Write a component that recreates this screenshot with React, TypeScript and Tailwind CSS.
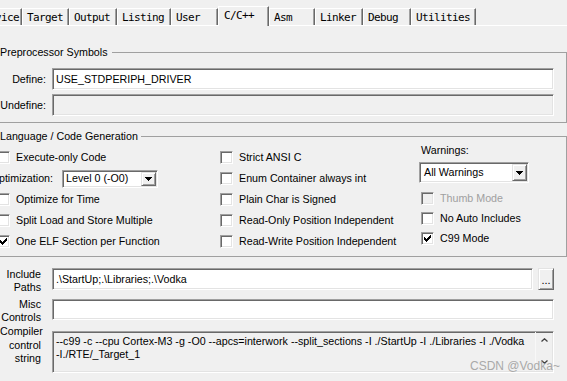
import React from 'react';

const sunken =
  "border border-t-[#a0a0a0] border-l-[#a0a0a0] border-r-white border-b-white shadow-[inset_1px_1px_0_#696969,inset_-1px_-1px_0_#e3e3e3]";
const raised =
  "border border-t-[#e3e3e3] border-l-[#e3e3e3] border-r-[#696969] border-b-[#696969] shadow-[inset_1px_1px_0_#ffffff,inset_-1px_-1px_0_#a0a0a0]";

function Tick() {
  const px = [
    [6, 0], [5, 1], [6, 1], [0, 2], [4, 2], [5, 2], [6, 2], [0, 3], [1, 3], [3, 3], [4, 3], [5, 3],
    [0, 4], [1, 4], [2, 4], [3, 4], [4, 4], [1, 5], [2, 5], [3, 5], [2, 6],
  ];
  return (
    <svg width="7" height="7" viewBox="0 0 7 7" shapeRendering="crispEdges">
      {px.map(([x, y], i) => (
        <rect key={i} x={x} y={y} width="1" height="1" fill="#000" />
      ))}
    </svg>
  );
}

function DownArrow() {
  return (
    <svg width="7" height="4" viewBox="0 0 7 4" shapeRendering="crispEdges">
      <path d="M0 0H7V1H6V2H5V3H4V4H3V3H2V2H1V1H0Z" fill="#000" />
    </svg>
  );
}

function Chevron({ up }: { up?: boolean }) {
  return (
    <svg width="7" height="4" viewBox="0 0 7 4">
      <path d={up ? "M0.5 3.5L3.5 0.8L6.5 3.5" : "M0.5 0.5L3.5 3.2L6.5 0.5"} fill="none" stroke="#404040" strokeWidth="1.3" />
    </svg>
  );
}

function Box({ checked, disabled }: { checked?: boolean; disabled?: boolean }) {
  return (
    <span
      className={`${sunken} w-[13px] h-[13px] shrink-0 flex items-center justify-center ${
        disabled ? 'bg-[#f0f0f0]' : 'bg-white'
      }`}
    >
      {checked && <Tick />}
    </span>
  );
}

function CheckRow({
  label,
  checked,
  disabled,
  tall,
}: {
  label: string;
  checked?: boolean;
  disabled?: boolean;
  tall?: boolean;
}) {
  return (
    <div className={`flex items-center gap-[6px] whitespace-nowrap ${tall ? 'h-[21px]' : 'h-[20px]'}`}>
      <Box checked={checked} disabled={disabled} />
      <span className={disabled ? 'text-[#a0a0a0]' : 'text-black'}>{label}</span>
    </div>
  );
}

const tabs = [
  { label: 'Device', w: 'w-[44px]' },
  { label: 'Target', w: 'w-[47px]' },
  { label: 'Output', w: 'w-[48px]' },
  { label: 'Listing', w: 'w-[54px]' },
  { label: 'User', w: 'w-[47px]' },
  { label: 'C/C++', w: 'w-[51px]', active: true },
  { label: 'Asm', w: 'w-[46px]' },
  { label: 'Linker', w: 'w-[48px]' },
  { label: 'Debug', w: 'w-[48px]' },
  { label: 'Utilities', w: 'w-[65px]' },
];

export default function App() {
  return (
    <div className="w-[567px] h-[381px] overflow-hidden bg-[#f0f0f0] relative text-black text-[10.7px] leading-[13px] font-[family-name:'Liberation_Sans',Arial,sans-serif]">
      {/* Tabs */}
      <div className="h-[26px] flex items-end border-b border-white font-[family-name:'DejaVu_Sans_Mono',monospace] text-[11px] tracking-[-0.62px]">
        <div className="flex items-end -ml-[22px]">
          {tabs.map((t) =>
            t.active ? (
              <div
                key={t.label}
                className={`${t.w} h-[20px] -mb-px shrink-0 bg-[#f0f0f0] border-t border-l border-r border-t-white border-l-white border-r-[#696969] shadow-[inset_-1px_0_0_#a0a0a0] pl-[5px] pt-[3px] leading-[12px] whitespace-nowrap`}
              >
                {t.label}
              </div>
            ) : (
              <div
                key={t.label}
                className={`${t.w} h-[17px] shrink-0 border-t border-l border-r border-t-white border-l-white border-r-[#696969] shadow-[inset_-1px_0_0_#a0a0a0] pl-[4px] pt-[3px] leading-[12px] whitespace-nowrap`}
              >
                {t.label}
              </div>
            )
          )}
        </div>
      </div>

      <div className="-ml-[8px] w-[575px]">
        {/* Preprocessor Symbols */}
        <fieldset className="mt-[20px] border border-[#a0a0a0] pb-[6px]">
          <legend className="ml-[7px] pr-[4px] leading-[13px]">Preprocessor Symbols</legend>
          <div className="pt-[9px] flex flex-col gap-[4px]">
            <div className="flex items-center h-[22px]">
              <div className="w-[53px] text-right whitespace-nowrap">Define:</div>
              <div className={`${sunken} ml-[6px] w-[502px] h-[22px] bg-white flex items-center pl-[3px]`}>
                USE_STDPERIPH_DRIVER
              </div>
            </div>
            <div className="flex items-center h-[22px]">
              <div className="w-[53px] text-right whitespace-nowrap">Undefine:</div>
              <div className={`${sunken} ml-[6px] w-[502px] h-[22px] bg-[#f0f0f0]`} />
            </div>
          </div>
        </fieldset>

        {/* Language / Code Generation */}
        <fieldset className="mt-[7px] border border-[#a0a0a0] pb-[4px]">
          <legend className="ml-[7px] pr-[3px] leading-[13px]">Language / Code Generation</legend>
          <div className="flex">
            <div className="w-[227px] pt-[4px] flex flex-col">
              <div className="ml-[4px]">
                <CheckRow label="Execute-only Code" tall />
              </div>
              <div className="flex items-center h-[21px]">
                <div className="w-[60px] flex justify-end whitespace-nowrap">
                  <span>Optimization:</span>
                </div>
                <div className={`${sunken} ml-[9px] w-[96px] h-[18px] bg-white p-[1px] flex items-stretch`}>
                  <span className="flex-1 pl-[2px] flex items-center whitespace-nowrap">Level 0 (-O0)</span>
                  <span className={`${raised} w-[15px] bg-[#f0f0f0] flex items-center justify-center`}>
                    <DownArrow />
                  </span>
                </div>
              </div>
              <div className="ml-[4px]">
                <CheckRow label="Optimize for Time" tall />
                <CheckRow label="Split Load and Store Multiple" tall />
                <CheckRow label="One ELF Section per Function" checked tall />
              </div>
            </div>

            <div className="w-[199px] pt-[4px] flex flex-col">
              <CheckRow label="Strict ANSI C" tall />
              <CheckRow label="Enum Container always int" tall />
              <CheckRow label="Plain Char is Signed" tall />
              <CheckRow label="Read-Only Position Independent" tall />
              <CheckRow label="Read-Write Position Independent" tall />
            </div>

            <div className="pt-[1px] flex flex-col">
              <div className="ml-[2px] h-[13px]">Warnings:</div>
              <div className={`${sunken} mt-[5px] w-[110px] h-[21px] bg-white p-[1px] flex items-stretch`}>
                <span className="flex-1 pl-[3px] flex items-center whitespace-nowrap">All Warnings</span>
                <span className={`${raised} w-[15px] bg-[#f0f0f0] flex items-center justify-center`}>
                  <DownArrow />
                </span>
              </div>
              <div className="ml-[2px] mt-[5px]">
                <CheckRow label="Thumb Mode" disabled />
                <CheckRow label="No Auto Includes" />
                <CheckRow label="C99 Mode" checked />
              </div>
            </div>
          </div>
        </fieldset>
      </div>

      {/* Bottom controls */}
      <div className="flex flex-col">
        <div className="mt-[11px] h-[22px] flex items-start">
          <div className="w-[41px] text-right leading-[13px] shrink-0">
            Include
            <br />
            Paths
          </div>
          <div className={`${sunken} ml-[11px] w-[481px] h-[22px] bg-white flex items-center pl-[3px] whitespace-nowrap`}>
            .\StartUp;.\Libraries;.\Vodka
          </div>
          <div className={`${raised} ml-[5px] w-[16px] h-[22px] bg-[#f0f0f0] flex items-end justify-center pb-[5px] text-[11px] leading-[8px]`}>
            ...
          </div>
        </div>

        <div className="mt-[9px] h-[21px] flex items-start">
          <div className="w-[41px] -mt-[1px] text-right leading-[13px] shrink-0">
            Misc
            <br />
            Controls
          </div>
          <div className={`${sunken} ml-[11px] w-[502px] h-[21px] bg-white`} />
        </div>

        <div className="mt-[11px] h-[42px] flex items-start">
          <div className="w-[41px] -mt-[6px] text-right leading-[13.5px] shrink-0">
            Compiler
            <br />
            control
            <br />
            string
          </div>
          <div className={`${sunken} ml-[11px] w-[502px] h-[42px] bg-[#f0f0f0] flex`}>
            <div className="flex-1 pl-[3px] pt-[3px] leading-[13px] whitespace-nowrap overflow-hidden">
              <div>--c99 -c --cpu Cortex-M3 -g -O0 --apcs=interwork --split_sections -I ./StartUp -I ./Libraries -I ./Vodka</div>
              <div>-I./RTE/_Target_1</div>
            </div>
            <div className="w-[17px] border-l border-[#f8f8f8] flex flex-col items-center justify-between pt-[6px] pb-[7px] mr-[1px] mb-[1px]">
              <Chevron up />
              <Chevron />
            </div>
          </div>
        </div>
      </div>

      <div className="absolute left-[470px] top-[359px] leading-[14px] text-[12px] text-[#a9a9a9] font-[family-name:'Liberation_Sans',Arial,sans-serif] whitespace-nowrap">
        CSDN @Vodka~
      </div>
    </div>
  );
}
